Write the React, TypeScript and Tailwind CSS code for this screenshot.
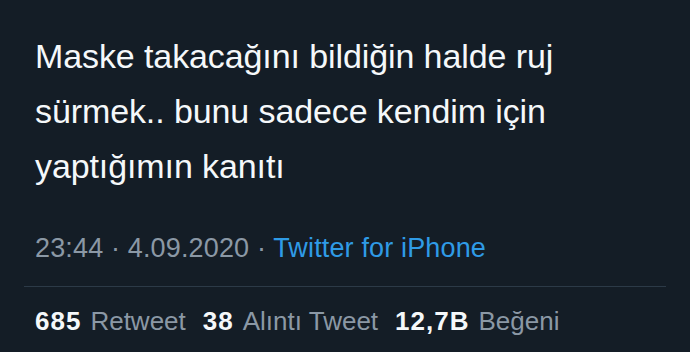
import React from 'react';

export default function App() {
  const stats = [
    { value: '685', label: 'Retweet' },
    { value: '38', label: 'Alıntı Tweet' },
    { value: '12,7B', label: 'Beğeni' },
  ];

  return (
    <div className="w-[690px] h-[352px] overflow-hidden bg-[#141d26] px-[24px] pt-[29px] font-['Liberation_Sans',Arial,sans-serif]">
      {/* Tweet text */}
      <p className="px-[11px] text-[34px] leading-[55px] tracking-[-0.1px] text-[#f5f8fa]">
        Maske takacağını bildiğin halde ruj
        <br />
        sürmek.. bunu sadece kendim için
        <br />
        yaptığımın kanıtı
      </p>

      {/* Meta */}
      <div className="mt-[38px] px-[11px] text-[27px] leading-[32px] tracking-[0.15px] text-[#8b98a5]">
        <span>23:44 · 4.09.2020 · </span>
        <span className="text-[#2f9be6]">Twitter for iPhone</span>
      </div>

      <div className="mt-[22px] h-px bg-[#2c3a47]" />

      {/* Stats */}
      <div className="mt-[19px] flex gap-[17px] px-[11px] text-[26px] leading-[30px]">
        {stats.map((s) => (
          <div key={s.label} className="flex gap-[9px]">
            <span className="font-bold tracking-[1px] text-[#f5f8fa]">{s.value}</span>
            <span className="text-[#8b98a5]">{s.label}</span>
          </div>
        ))}
      </div>
    </div>
  );
}
